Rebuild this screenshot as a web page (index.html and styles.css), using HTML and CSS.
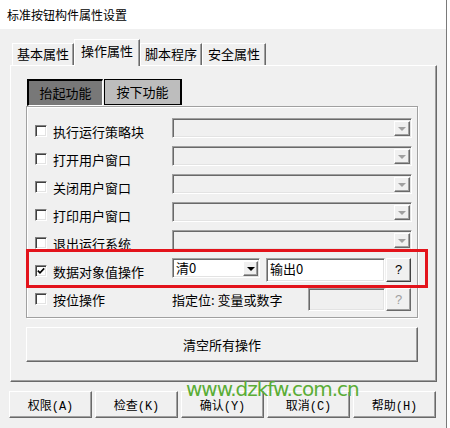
FILE: index.html
```html
<!DOCTYPE html>
<html lang="zh-CN">
<head>
    <meta charset="UTF-8">
    <title>标准按钮构件属性设置</title>
    <link rel="stylesheet" href="styles.css">
</head>
<body>
<div class="window">
    <div class="titlebar">标准按钮构件属性设置</div>

    <div class="client">
        <ul class="tabs">
            <li class="tab t1">基本属性</li>
            <li class="tab t2 active">操作属性</li>
            <li class="tab t3">脚本程序</li>
            <li class="tab t4">安全属性</li>
        </ul>

        <div class="panel">
            <div class="subtabs">
                <div class="subtab down">抬起功能</div>
                <div class="subtab up">按下功能</div>
            </div>

            <div class="group">
                <div class="row">
                    <label class="check"><span class="box"></span>执行运行策略块</label>
                    <div class="combo disabled"><span class="drop"></span></div>
                </div>
                <div class="row">
                    <label class="check"><span class="box"></span>打开用户窗口</label>
                    <div class="combo disabled"><span class="drop"></span></div>
                </div>
                <div class="row">
                    <label class="check"><span class="box"></span>关闭用户窗口</label>
                    <div class="combo disabled"><span class="drop"></span></div>
                </div>
                <div class="row">
                    <label class="check"><span class="box"></span>打印用户窗口</label>
                    <div class="combo disabled"><span class="drop"></span></div>
                </div>
                <div class="row">
                    <label class="check"><span class="box"></span>退出运行系统</label>
                    <div class="combo disabled"><span class="drop"></span></div>
                </div>
                <!-- data object row -->
                <div class="row">
                    <label class="check"><span class="box"><svg width="8" height="8" viewBox="0 0 8 8"><path d="M0.8 3.6 L3 5.9 L7.2 1.4" fill="none" stroke="#000" stroke-width="1.6"/></svg></span>数据对象值操作</label>
                    <div class="combo value"><span class="text">清0</span><span class="drop"></span></div>
                    <div class="field">输出0</div>
                    <div class="qbtn">?</div>
                </div>
                <div class="row bit">
                    <label class="check"><span class="box"></span>按位操作</label>
                    <span class="hint">指定位: 变量或数字</span>
                    <div class="field disabled"></div>
                    <div class="qbtn disabled">?</div>
                </div>
            </div>

            <button class="clear-btn">清空所有操作</button>
        </div>

        <div class="footer">
            <button class="btn">权限(A)</button>
            <button class="btn">检查(K)</button>
            <button class="btn">确认(Y)</button>
            <button class="btn">取消(C)</button>
            <button class="btn">帮助(H)</button>
        </div>
    </div>

    <div class="mark"></div>
    <div class="watermark">www.dzkfw.com.cn</div>
</div>
</body>
</html>
```

FILE: styles.css
```css
* {
    box-sizing: border-box;
}
body {
    margin: 0;
    background: #fff;
    font-family: "Noto Sans CJK SC", sans-serif;
    font-size: 13px;
    color: #000;
}
.window {
    position: relative;
    width: 447px;
    height: 428px;
    border-right: 1px solid #7a7a7a;
}
.titlebar {
    height: 29px;
    line-height: 29px;
    padding-left: 7px;
    font-size: 12px;
    background: #fff;
}
.client {
    height: 399px;
    padding-top: 10px;
    background: #f0f0f0;
}

/* tabs */
.tabs {
    position: relative;
    z-index: 1;
    display: flex;
    align-items: flex-end;
    height: 26px;
    margin: 0;
    padding: 0 0 0 12px;
    list-style: none;
}
.tab {
    height: 22px;
    padding-top: 1px;
    line-height: 17px;
    text-align: center;
    background: #f0f0f0;
    border: 1px solid #fff;
    border-right-color: #696969;
    border-bottom: none;
    box-shadow: inset -1px 0 0 #a0a0a0;
}
.t1 { width: 62px; }
.t2 { width: 66px; }
.t3 { width: 62px; }
.t4 { width: 64px; }
.tab.active {
    height: 27px;
    padding-top: 2px;
    margin-bottom: -1px;
}

/* panel */
.panel {
    width: 427px;
    height: 317px;
    margin-left: 10px;
    padding: 13px 17px 0 15px;
    border: 1px solid #fff;
    border-right-color: #696969;
    border-bottom-color: #696969;
    box-shadow: inset -1px -1px 0 #a0a0a0;
}
.subtabs {
    display: flex;
    gap: 1px;
    height: 27px;
    margin-left: 1px;
}
.subtab {
    height: 27px;
    line-height: 24px;
    text-align: center;
}
.subtab.down {
    width: 76px;
    background: #787878;
    border-top: 2px solid #000;
    border-left: 2px solid #000;
    border-right: 1px solid #fff;
    border-bottom: 1px solid #fff;
}
.subtab.up {
    width: 78px;
    height: 26px;
    background: #bdbdbd;
    border: 1px solid #000;
    border-right-width: 2px;
}

.group {
    width: 392px;
    padding: 7px 0 4px 8px;
    border: 1px solid #a0a0a0;
    box-shadow: inset 1px 1px 0 #fff, 1px 1px 0 #fff;
}
.row {
    display: flex;
    align-items: center;
    height: 28px;
}
.row.bit {
    margin-top: 3px;
}
.check {
    display: flex;
    align-items: center;
    gap: 6px;
    width: 137px;
    margin-top: 6px;
}
.row.bit .check {
    margin-top: 0;
}
.box {
    display: flex;
    align-items: center;
    justify-content: center;
    width: 12px;
    height: 12px;
    background: #fff;
    border: 1px solid;
    border-color: #808080 #fff #fff #808080;
    box-shadow: inset 1px 1px 0 #404040, inset -1px -1px 0 #e3e3e3;
}

/* combos and fields */
.combo {
    display: flex;
    align-items: center;
    justify-content: flex-end;
    width: 240px;
    height: 20px;
    padding-right: 1px;
    border: 1px solid;
    border-color: #a0a0a0 #fff #fff #a0a0a0;
    box-shadow: inset 1px 1px 0 #696969, inset -1px -1px 0 #e3e3e3;
    background: #f0f0f0;
}
.drop {
    display: flex;
    align-items: center;
    justify-content: center;
    width: 16px;
    height: 15px;
    margin-top: 1px;
    background: #f0f0f0;
    border: 1px solid;
    border-color: #fff #696969 #696969 #fff;
    box-shadow: inset -1px -1px 0 #a0a0a0;
}
.drop::after {
    content: "";
    border-left: 4px solid transparent;
    border-right: 4px solid transparent;
    border-top: 4px solid #a0a0a0;
    margin-top: 1px;
}
.combo.value {
    width: 88px;
    background: #fff;
}
.combo.value .text {
    flex: 1;
    padding-left: 3px;
    line-height: 16px;
}
.combo.value .drop {
    width: 15px;
}
.combo.value .drop::after {
    border-top-color: #000;
}
.field {
    width: 119px;
    height: 24px;
    margin: 4px 0 0 6px;
    padding-left: 3px;
    line-height: 20px;
    background: #fff;
    border: 1px solid;
    border-color: #a0a0a0 #fff #fff #a0a0a0;
    box-shadow: inset 1px 1px 0 #696969, inset -1px -1px 0 #e3e3e3;
}
.field.disabled {
    width: 77px;
    height: 23px;
    margin: 0;
    background: #f0f0f0;
}
.qbtn {
    width: 25px;
    height: 24px;
    margin: 4px 0 0 1px;
    text-align: center;
    line-height: 22px;
    font-family: "Liberation Sans", sans-serif;
    font-size: 13px;
    background: #f0f0f0;
    border: 1px solid;
    border-color: #fff #404040 #404040 #fff;
    box-shadow: inset -1px -1px 0 #a0a0a0;
}
.qbtn.disabled {
    height: 23px;
    margin-top: 0;
    color: #a0a0a0;
    border-color: #fff #696969 #696969 #fff;
}
.hint {
    width: 136px;
}

/* buttons */
.clear-btn,
.btn {
    padding: 0;
    font: inherit;
    color: #000;
    background: #f0f0f0;
    border: 1px solid;
    border-color: #fff #696969 #696969 #fff;
    box-shadow: inset -1px -1px 0 #a0a0a0;
}
.clear-btn {
    display: block;
    width: 392px;
    height: 35px;
    margin-top: 9px;
}
.footer {
    display: flex;
    gap: 3px;
    margin-top: 9px;
    padding-left: 9px;
}
.btn {
    width: 83px;
    height: 27px;
    font-family: "Liberation Mono", "Noto Sans CJK SC", monospace;
    font-size: 12px;
}

/* overlays */
.mark {
    position: absolute;
    left: 26px;
    top: 249px;
    width: 402px;
    height: 39px;
    border: 3px solid #e3131b;
}
.watermark {
    position: absolute;
    left: 186px;
    top: 379px;
    font-family: "DejaVu Sans", sans-serif;
    font-size: 20px;
    line-height: 20px;
    letter-spacing: -1px;
    color: #5aad36;
}
```
